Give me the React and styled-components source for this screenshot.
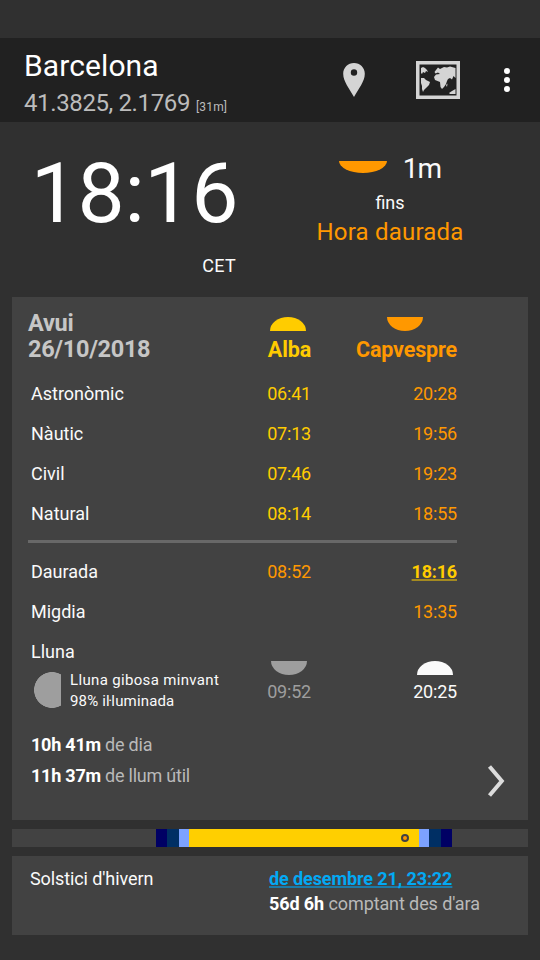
import React from "react";
import styled, { createGlobalStyle } from "styled-components";

const GlobalStyle = createGlobalStyle`
  body { margin: 0; background: #303030; }
  * { box-sizing: border-box; }
`;

const Screen = styled.main`
  width: 540px;
  height: 960px;
  padding-top: 38px;
  display: flex;
  flex-direction: column;
  background: #303030;
  color: #fafafa;
  font-family: Roboto, sans-serif;
  font-size: 18px;
  white-space: nowrap;
  overflow: hidden;
`;

const Toolbar = styled.header`
  height: 84px;
  padding: 8px 24px 2px;
  display: flex;
  justify-content: space-between;
  background: #212121;
`;

const Place = styled.h1`
  margin: 0;
  font-size: 30px;
  font-weight: 400;
  line-height: 40px;
  letter-spacing: 0.1px;
  color: #fff;
`;

const Coordinates = styled.div`
  font-size: 24px;
  line-height: 34px;
  letter-spacing: -0.38px;
  color: #bcbcbc;
`;

const Altitude = styled.small`
  font-size: 12px;
  margin-left: 6px;
  letter-spacing: 0.15px;
`;

const Actions = styled.nav`
  display: flex;
  align-items: center;
  height: 68px;
  margin-right: 6px;
`;

const IconButton = styled.button`
  display: flex;
  padding: 0;
  margin-left: ${(p) => p.$gap || 0}px;
  border: 0;
  background: none;
  color: #d4d4d4;
`;

const Hero = styled.section`
  height: 175px;
  display: flex;
`;

const ClockColumn = styled.div`
  flex: none;
  width: 238px;
  padding-top: 30px;
  display: flex;
  flex-direction: column;
  align-items: flex-end;
`;

const Clock = styled.div`
  font-size: 84px;
  line-height: 84px;
  letter-spacing: -0.4px;
  color: #fff;
`;

const Zone = styled.div`
  margin-top: 18px;
  margin-right: 2px;
  line-height: 24px;
  letter-spacing: 0.3px;
`;

const NextEvent = styled.div`
  flex: none;
  width: 304px;
  padding-top: 30px;
  display: flex;
  flex-direction: column;
  align-items: center;
  line-height: 24px;
`;

const Countdown = styled.div`
  display: flex;
  gap: 16px;
  height: 39px;
  padding-top: 9px;
  font-size: 28px;
  line-height: 16px;
  letter-spacing: -0.9px;
`;

const EventName = styled.div`
  margin-top: 3px;
  font-size: 24px;
  line-height: 28px;
  letter-spacing: 0.2px;
  color: #ff9800;
`;

const HalfDisc = styled.span`
  display: block;
  flex: none;
  width: ${(p) => (p.$large ? 48 : 36)}px;
  height: ${(p) => (p.$large ? 12 : 14)}px;
  margin-right: ${(p) => p.$inset || 0}px;
  background: ${(p) => p.$color};
  border-radius: ${(p) => (p.$rising ? "50% 50% 0 0 / 100% 100% 0 0" : "0 0 50% 50% / 0 0 100% 100%")};
`;

const Card = styled.section`
  margin: 0 12px;
  background: #424242;
`;

const DayCard = styled(Card)`
  height: 523px;
  padding: 13px 16px 0;
`;

const Row = styled.div`
  display: grid;
  grid-template-columns: 183px 100px 146px;
  height: ${(p) => p.$height || 40}px;
  line-height: ${(p) => p.$height || 40}px;
`;

const DateHeading = styled.h2`
  margin: 0;
  font-size: 23.5px;
  font-weight: 700;
  line-height: 26px;
  letter-spacing: -0.3px;
  color: #c6c6c6;
`;

const ColumnHead = styled.div`
  display: flex;
  flex-direction: column;
  align-items: flex-end;
  padding-top: 7px;
  font-size: 21.5px;
  font-weight: 700;
  line-height: 24px;
  letter-spacing: -0.15px;
  gap: 7px;
  color: ${(p) => p.$color};
`;

const Label = styled.div`
  padding-left: 3px;
`;

const Time = styled.time`
  text-align: right;
  letter-spacing: -0.2px;
  color: ${(p) => p.$color};
`;

const ActiveTime = styled(Time)`
  font-weight: 700;
  text-decoration: underline;
  text-decoration-color: #a48a20;
  text-decoration-thickness: 2px;
  text-underline-offset: 1px;
  text-decoration-skip-ink: none;
`;

const Divider = styled.hr`
  width: 429px;
  height: 3px;
  margin: 6px 0 9px;
  border: 0;
  background: #686868;
`;

const MoonCell = styled.div`
  padding-left: 3px;
  line-height: 40px;
`;

const MoonPhase = styled.div`
  display: flex;
  gap: 9px;
  padding-left: 3px;
  margin-top: -3px;
`;

const MoonText = styled.div`
  padding-top: 1px;
  font-size: 15px;
  line-height: 21px;
  letter-spacing: 0.34px;
`;

const MoonDetail = styled.div`
  letter-spacing: 0.15px;
`;

const MoonDisc = styled.span`
  flex: none;
  width: 27px;
  height: 36px;
  margin-top: 3px;
  background: radial-gradient(circle at 18px 18px, #9e9e9e 17.6px, transparent 18.2px);
`;

const MoonTime = styled.div`
  display: flex;
  flex-direction: column;
  align-items: flex-end;
  gap: 5px;
  padding-top: 29px;
  line-height: 24px;
  letter-spacing: -0.2px;
  color: ${(p) => p.$color};
`;

const Summary = styled.div`
  display: flex;
  justify-content: space-between;
  padding: 0 6px 0 3px;
  margin-top: 17px;
  line-height: 31px;
  letter-spacing: -0.23px;
`;

const Muted = styled.span`
  color: #b9b9b9;
`;

const Strong = styled.strong`
  font-weight: 700;
  color: #fff;
`;

const NextIcon = styled.svg`
  margin-top: 35px;
`;

const Timeline = styled(Card)`
  height: 18px;
  margin: 9px 12px;
  padding-left: 144px;
  display: flex;
`;

const Band = styled.div`
  width: ${(p) => p.$width}px;
  background: ${(p) => p.$color};
`;

const DayBand = styled(Band)`
  display: flex;
  align-items: center;
  justify-content: flex-end;
  padding-right: 10px;
`;

const NowMarker = styled.span`
  width: 8px;
  height: 8px;
  border: 2px solid #424242;
  border-radius: 50%;
  background: #ff9800;
`;

const SolsticeCard = styled(Card)`
  height: 79px;
  display: grid;
  grid-template-columns: 239px 1fr;
  padding: 10px 0 0 18px;
  line-height: 25px;
  letter-spacing: -0.1px;
`;

const DateLink = styled.a`
  display: block;
  width: max-content;
  font-weight: 700;
  color: #03a9f4;
  text-decoration: underline;
  text-decoration-color: #1b7ba9;
  text-decoration-thickness: 2px;
  text-underline-offset: 1px;
  text-decoration-skip-ink: none;
`;

const YELLOW = "#ffcc00";
const ORANGE = "#ff9800";

const twilights = [
  ["Astronòmic", "06:41", "20:28"],
  ["Nàutic", "07:13", "19:56"],
  ["Civil", "07:46", "19:23"],
  ["Natural", "08:14", "18:55"],
];

function PinIcon() {
  return (
    <svg width="22" height="34" viewBox="0 0 22 34">
      <path
        fill="currentColor"
        fillRule="evenodd"
        d="M11 0C5 0 .2 4.700 .2 10.700C.2 18.500 6.500 25.500 11 34C15.500 25.500 21.800 18.500 21.800 10.700C21.800 4.700 17 0 11 0ZM11 6.300a3.200 3.200 0 1 1 0 6.400a3.200 3.200 0 1 1 0-6.400Z"
      />
    </svg>
  );
}

function MapIcon() {
  return (
    <svg width="44" height="38" viewBox="0 0 44 38">
      <path fill="currentColor" fillRule="evenodd" d="M0 0H44V38H0ZM3.500 3.500V34.500H40.500V3.500Z" />
      <g fill="currentColor">
        <path d="M5 7L7 6L9 7L11 9L12 11L10 10L9 12L7 11L6 13L5 12Z" />
        <path d="M5 17L8 17L10 19L14 21L13 24L10 27L8 29L7 31L6 28L6 25L5 22Z" />
        <path d="M18.500 11L20 9L22 6.500L24 8L28 6L31 6.500L34 5.500L39.500 7V17L37.500 15L36 18.500L34 17L32 18L31 20L30 23L28 26L26 28L24.500 26L24 21L19 19L18 16L20 13.500L24 13L22 11.500L19.500 12.500Z" />
        <path d="M30 24L31.500 22.500L31 26ZM33 32L36 30L39.500 28V33H34Z" />
      </g>
    </svg>
  );
}

function MoreIcon() {
  return (
    <svg width="6" height="26" viewBox="0 0 6 26" fill="#fff">
      <circle cx="3" cy="4" r="3" />
      <circle cx="3" cy="13" r="3" />
      <circle cx="3" cy="22" r="3" />
    </svg>
  );
}

export default function App() {
  return (
    <>
      <GlobalStyle />
      <Screen>
        <Toolbar>
          <div>
            <Place>Barcelona</Place>
            <Coordinates>
              41.3825, 2.1769<Altitude>[31m]</Altitude>
            </Coordinates>
          </div>
          <Actions>
            <IconButton><PinIcon /></IconButton>
            <IconButton $gap={51}><MapIcon /></IconButton>
            <IconButton $gap={44}><MoreIcon /></IconButton>
          </Actions>
        </Toolbar>

        <Hero>
          <ClockColumn>
            <Clock>18:16</Clock>
            <Zone>CET</Zone>
          </ClockColumn>
          <NextEvent>
            <Countdown>
              <HalfDisc $large $color={ORANGE} />
              1m
            </Countdown>
            <div>fins</div>
            <EventName>Hora daurada</EventName>
          </NextEvent>
        </Hero>

        <DayCard>
          <Row $height={64}>
            <DateHeading>
              Avui
              <br />
              26/10/2018
            </DateHeading>
            <ColumnHead $color={YELLOW}>
              <HalfDisc $rising $color={YELLOW} $inset={5} />
              Alba
            </ColumnHead>
            <ColumnHead $color={ORANGE}>
              <HalfDisc $color={ORANGE} $inset={34} />
              Capvespre
            </ColumnHead>
          </Row>
          {twilights.map(([name, dawn, dusk]) => (
            <Row key={name}>
              <Label>{name}</Label>
              <Time $color={YELLOW}>{dawn}</Time>
              <Time $color={ORANGE}>{dusk}</Time>
            </Row>
          ))}
          <Divider />
          <Row>
            <Label>Daurada</Label>
            <Time $color={ORANGE}>08:52</Time>
            <ActiveTime $color={YELLOW}>18:16</ActiveTime>
          </Row>
          <Row>
            <Label>Migdia</Label>
            <span />
            <Time $color={ORANGE}>13:35</Time>
          </Row>
          <Row $height={80}>
            <MoonCell>
              Lluna
              <MoonPhase>
                <MoonDisc />
                <MoonText>
                  Lluna gibosa minvant
                  <MoonDetail>98% iŀluminada</MoonDetail>
                </MoonText>
              </MoonPhase>
            </MoonCell>
            <MoonTime $color="#9e9e9e">
              <HalfDisc $color="#9e9e9e" $inset={4} />
              09:52
            </MoonTime>
            <MoonTime $color="#fafafa">
              <HalfDisc $rising $color="#fafafa" $inset={4} />
              20:25
            </MoonTime>
          </Row>
          <Summary>
            <div>
              <div><Strong>10h 41m</Strong> <Muted>de dia</Muted></div>
              <div><Strong>11h 37m</Strong> <Muted>de llum útil</Muted></div>
            </div>
            <NextIcon width="20" height="34" viewBox="0 0 20 34" fill="none">
              <path d="M3.500 2.500L15.800 17L3.500 31.500" stroke="#dcdcdc" strokeWidth="4" />
            </NextIcon>
          </Summary>
        </DayCard>

        <Timeline>
          <Band $width={11} $color="#000064" />
          <Band $width={12} $color="#002f64" />
          <Band $width={10} $color="#7ca2ff" />
          <DayBand $width={230} $color="#ffcf00">
            <NowMarker />
          </DayBand>
          <Band $width={10} $color="#7ca2ff" />
          <Band $width={12} $color="#002f64" />
          <Band $width={11} $color="#000064" />
        </Timeline>

        <SolsticeCard>
          <div>Solstici d'hivern</div>
          <div>
            <DateLink>de desembre 21, 23:22</DateLink>
            <Strong>56d 6h</Strong> <Muted>comptant des d'ara</Muted>
          </div>
        </SolsticeCard>
      </Screen>
    </>
  );
}
